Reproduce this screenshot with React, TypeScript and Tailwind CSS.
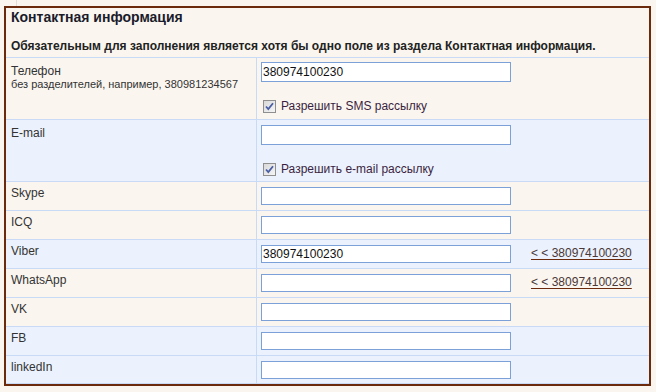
import React from "react";

// contact rows
const rows = [
  { id: "skype", label: "Skype", value: "", blue: false },
  { id: "icq", label: "ICQ", value: "", blue: false },
  { id: "viber", label: "Viber", value: "380974100230", blue: true, link: "< < 380974100230" },
  { id: "whatsapp", label: "WhatsApp", value: "", blue: false, link: "< < 380974100230" },
  { id: "vk", label: "VK", value: "", blue: false },
  { id: "fb", label: "FB", value: "", blue: true },
  { id: "linkedin", label: "linkedIn", value: "", blue: true },
];

const Check = ({ label }: { label: string }) => (
  <label className="flex items-center gap-[5px] text-[12px] leading-[14px] text-[#3b1f3f]">
    <span className="w-[13px] h-[13px] border border-[#8f8f8f] bg-gradient-to-br from-[#d9d9d9] to-[#f5f5f5] flex items-center justify-center">
      <svg width="9" height="9" viewBox="0 0 9 9">
        <path d="M1 4.5 L3.3 7 L8 1.2" fill="none" stroke="#4a5ea6" strokeWidth="1.8" />
      </svg>
    </span>
    {label}
  </label>
);

const Field = ({ value, tall }: { value: string; tall?: boolean }) => (
  <input
    defaultValue={value}
    className={`w-[250px] ${tall ? "h-[20px]" : "h-[18px]"} border border-[#7ba1d8] bg-white px-[1px] text-[12px] text-[#111] outline-none font-['Liberation_Sans',Arial,sans-serif]`}
  />
);

export default function App() {
  return (
    <div className="w-[656px] h-[392px] bg-[#faf6ef] font-['Liberation_Sans',Arial,sans-serif] overflow-hidden">
      <div className="h-[6px] pl-[16px]">
        <div className="w-px h-full bg-[#e2ddd6]" />
      </div>
      <div className="ml-[4px] w-[647px] border-2 border-[#6b2a0b] bg-[#faf6ef]">
        <div className="h-[49px] px-[5px]">
          <h1 className="text-[14px] leading-[18px] font-bold text-[#1b1b2b]">Контактная информация</h1>
          <p className="mt-[13px] text-[12px] leading-[14px] font-bold text-[#222]">
            Обязательным для заполнения является хотя бы одно поле из раздела Контактная информация.
          </p>
        </div>
        <div className="border-t border-[#c8daf5]">
          <div className="flex h-[62px] border-b border-[#c8daf5] bg-[#faf6ef]">
            <div className="w-[251px] border-r border-[#c8daf5] pl-[5px] pt-[6px]">
              <div className="text-[12px] leading-[14px] text-[#333]">Телефон</div>
              <div className="text-[11px] leading-[13px] text-[#333]">без разделителей, например, 380981234567</div>
            </div>
            <div className="pl-[4px] pt-[4px] flex flex-col gap-[17px]">
              <Field value="380974100230" tall />
              <div className="pl-[2px]">
                <Check label="Разрешить SMS рассылку" />
              </div>
            </div>
          </div>
          <div className="flex h-[62px] border-b border-[#c8daf5] bg-[#ebf2fd]">
            <div className="w-[251px] border-r border-[#c8daf5] pl-[5px] pt-[6px]">
              <div className="text-[12px] leading-[14px] text-[#333]">E-mail</div>
            </div>
            <div className="pl-[4px] pt-[5px] flex flex-col gap-[17px]">
              <Field value="" tall />
              <div className="pl-[2px]">
                <Check label="Разрешить e-mail рассылку" />
              </div>
            </div>
          </div>
          {rows.map((r, i) => (
            <div
              key={r.id}
              className={`flex ${i === rows.length - 1 ? "h-[28px]" : "h-[29px]"} border-b border-[#c8daf5] ${r.blue ? "bg-[#ebf2fd]" : "bg-[#faf6ef]"}`}
            >
              <div className="w-[251px] border-r border-[#c8daf5] pl-[5px] pt-[4px] text-[12px] leading-[14px] text-[#333]">
                {r.label}
              </div>
              <div className="pl-[4px] pt-[5px] flex items-start">
                <Field value={r.value} />
                {r.link && (
                  <a href="#" className="ml-[20px] mt-[1px] text-[12px] leading-[14px] text-[#4a3838] underline decoration-[#6b2a0b] underline-offset-2">
                    {r.link}
                  </a>
                )}
              </div>
            </div>
          ))}
        </div>
      </div>
    </div>
  );
}
